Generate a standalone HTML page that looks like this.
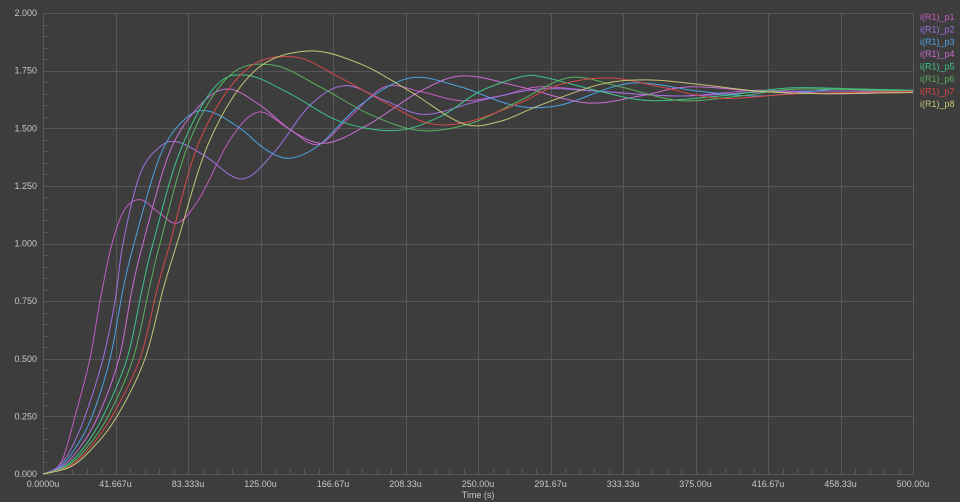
<!DOCTYPE html>
<html><head><meta charset="utf-8"><style>
html,body{margin:0;padding:0;background:#3d3d3d;width:960px;height:502px;overflow:hidden}
svg{display:block}
text{font-family:"Liberation Sans",sans-serif;font-size:9px}
</style></head><body>
<svg id="s" width="960" height="502" xmlns="http://www.w3.org/2000/svg">
<rect width="960" height="502" fill="#3d3d3d"/>
<g id="grid" stroke="#575757" stroke-width="1"></g>
<g id="curves" fill="none" stroke-width="1"></g>
<g fill="#c8c8c8" text-anchor="end">
<text x="37" y="16">2.000</text>
<text x="37" y="73.6">1.750</text>
<text x="37" y="131.3">1.500</text>
<text x="37" y="188.9">1.250</text>
<text x="37" y="246.5">1.000</text>
<text x="37" y="304.1">0.750</text>
<text x="37" y="361.8">0.500</text>
<text x="37" y="419.4">0.250</text>
<text x="37" y="477">0.000</text>
</g>
<g fill="#c8c8c8" text-anchor="middle">
<text x="43" y="487">0.0000u</text>
<text x="115.5" y="487">41.667u</text>
<text x="188" y="487">83.333u</text>
<text x="260.5" y="487">125.00u</text>
<text x="333" y="487">166.67u</text>
<text x="405.5" y="487">208.33u</text>
<text x="478" y="487">250.00u</text>
<text x="550.5" y="487">291.67u</text>
<text x="623" y="487">333.33u</text>
<text x="695.5" y="487">375.00u</text>
<text x="768" y="487">416.67u</text>
<text x="840.5" y="487">458.33u</text>
<text x="913" y="487">500.00u</text>
<text x="478" y="498">Time (s)</text>
</g>
<g>
<text x="920" y="20" fill="#c25cc2">i(R1)_p1</text>
<text x="920" y="32.4" fill="#9f72e2">i(R1)_p2</text>
<text x="920" y="44.8" fill="#4ca2e0">i(R1)_p3</text>
<text x="920" y="57.2" fill="#c86ed0">i(R1)_p4</text>
<text x="920" y="69.6" fill="#3ec488">i(R1)_p5</text>
<text x="920" y="82" fill="#5cb05c">i(R1)_p6</text>
<text x="920" y="94.4" fill="#d44848">i(R1)_p7</text>
<text x="920" y="106.8" fill="#c6c67a">i(R1)_p8</text>
</g>
</svg>
<script>
var NS="http://www.w3.org/2000/svg";
function el(p,t,a){var e=document.createElementNS(NS,t);for(var k in a)e.setAttribute(k,a[k]);p.appendChild(e);return e;}
var L=43,R=913,T=13,B=474;
var g=document.getElementById('grid');
el(g,'rect',{x:L+.5,y:T+.5,width:R-L,height:B-T,fill:'none'});
for(var i=1;i<12;i++){var x=Math.round(L+i*(R-L)/12)+.5;el(g,'line',{x1:x,y1:T,x2:x,y2:B});}
for(var i=1;i<8;i++){var y=Math.round(T+i*(B-T)/8)+.5;el(g,'line',{x1:L,y1:y,x2:R,y2:y});}
for(var i=0;i<60;i++){if(i%5==0)continue;var x=Math.round(L+i*(R-L)/60)+.5;el(g,'line',{x1:x,y1:B-5,x2:x,y2:B});}
for(var i=0;i<40;i++){if(i%5==0)continue;var y=Math.round(T+i*(B-T)/40)+.5;el(g,'line',{x1:L,y1:y,x2:L+5,y2:y});}
var C=[
["#c25cc2",[[43,0],[55,.02],[64,.08],[75,.25],[90,.5],[100,.75],[112,1],[125,1.15],[141,1.19],[160,1.13],[178,1.09],[200,1.2],[230,1.45],[258,1.57],[288,1.5],[318,1.43],[350,1.55],[385,1.68],[420,1.66],[460,1.62],[500,1.64],[540,1.68],[600,1.66],[680,1.64],[760,1.665],[840,1.65],[913,1.66]]],
["#9f72e2",[[43,0],[58,.03],[70,.1],[85,.25],[103,.5],[115,.75],[123,1],[140,1.3],[160,1.42],[178,1.44],[205,1.38],[242,1.28],[275,1.4],[310,1.6],[345,1.685],[385,1.62],[425,1.56],[480,1.62],[540,1.67],[600,1.66],[680,1.64],[780,1.66],[913,1.66]]],
["#4ca2e0",[[43,0],[60,.03],[75,.11],[92,.25],[110,.5],[123,.8],[134,1],[160,1.38],[185,1.54],[208,1.575],[240,1.5],[265,1.41],[290,1.37],[320,1.43],[360,1.6],[410,1.718],[460,1.68],[513,1.6],[560,1.6],[630,1.695],[700,1.66],[760,1.64],[840,1.67],[913,1.66]]],
["#c86ed0",[[43,0],[62,.03],[79,.11],[98,.25],[119,.5],[132,.8],[143,1],[170,1.4],[200,1.6],[228,1.67],[260,1.6],[295,1.48],[327,1.436],[370,1.52],[420,1.66],[463,1.727],[520,1.68],[587,1.61],[640,1.64],[690,1.68],[760,1.66],[840,1.65],[913,1.665]]],
["#3ec488",[[43,0],[64,.03],[83,.11],[103,.25],[127,.5],[142,.8],[153,1],[180,1.4],[215,1.68],[247,1.73],[290,1.65],[340,1.53],[395,1.49],[440,1.55],[480,1.66],[523,1.725],[545,1.72],[600,1.66],[650,1.62],[720,1.64],[790,1.675],[860,1.67],[913,1.665]]],
["#5cb05c",[[43,0],[66,.03],[86,.11],[108,.25],[133,.5],[149,.8],[160,1],[190,1.45],[230,1.73],[273,1.774],[320,1.68],[370,1.56],[420,1.49],[470,1.52],[520,1.62],[570,1.72],[620,1.68],[680,1.62],[740,1.64],[800,1.67],[913,1.66]]],
["#d44848",[[43,0],[68,.03],[89,.11],[112,.25],[140,.5],[157,.8],[170,1],[200,1.45],[245,1.75],[293,1.81],[340,1.72],[390,1.6],[430,1.52],[470,1.53],[520,1.61],[560,1.69],[610,1.718],[660,1.68],[720,1.63],[800,1.65],[913,1.66]]],
["#c6c67a",[[43,0],[70,.03],[92,.11],[117,.25],[145,.5],[163,.8],[177,1],[210,1.45],[255,1.75],[308,1.835],[360,1.78],[410,1.66],[463,1.52],[500,1.53],[540,1.6],[600,1.69],[647,1.71],[700,1.69],[760,1.66],[820,1.65],[913,1.655]]]
];
var cg=document.getElementById('curves');
function Y(v){return B-v*(B-T)/2;}
C.forEach(function(c){
 var p=c[1].map(function(q){return [q[0],Y(q[1])];});
 var d="M"+p[0][0]+","+p[0][1];
 for(var i=0;i<p.length-1;i++){
  var p0=p[i-1]||p[i],p1=p[i],p2=p[i+1],p3=p[i+2]||p2;
  var c1=[p1[0]+(p2[0]-p0[0])/6,p1[1]+(p2[1]-p0[1])/6];
  var c2=[p2[0]-(p3[0]-p1[0])/6,p2[1]-(p3[1]-p1[1])/6];
  d+=" C"+c1[0].toFixed(2)+","+c1[1].toFixed(2)+" "+c2[0].toFixed(2)+","+c2[1].toFixed(2)+" "+p2[0]+","+p2[1].toFixed(2);
 }
 el(cg,'path',{d:d,stroke:c[0]});
});
</script>
</body></html>
